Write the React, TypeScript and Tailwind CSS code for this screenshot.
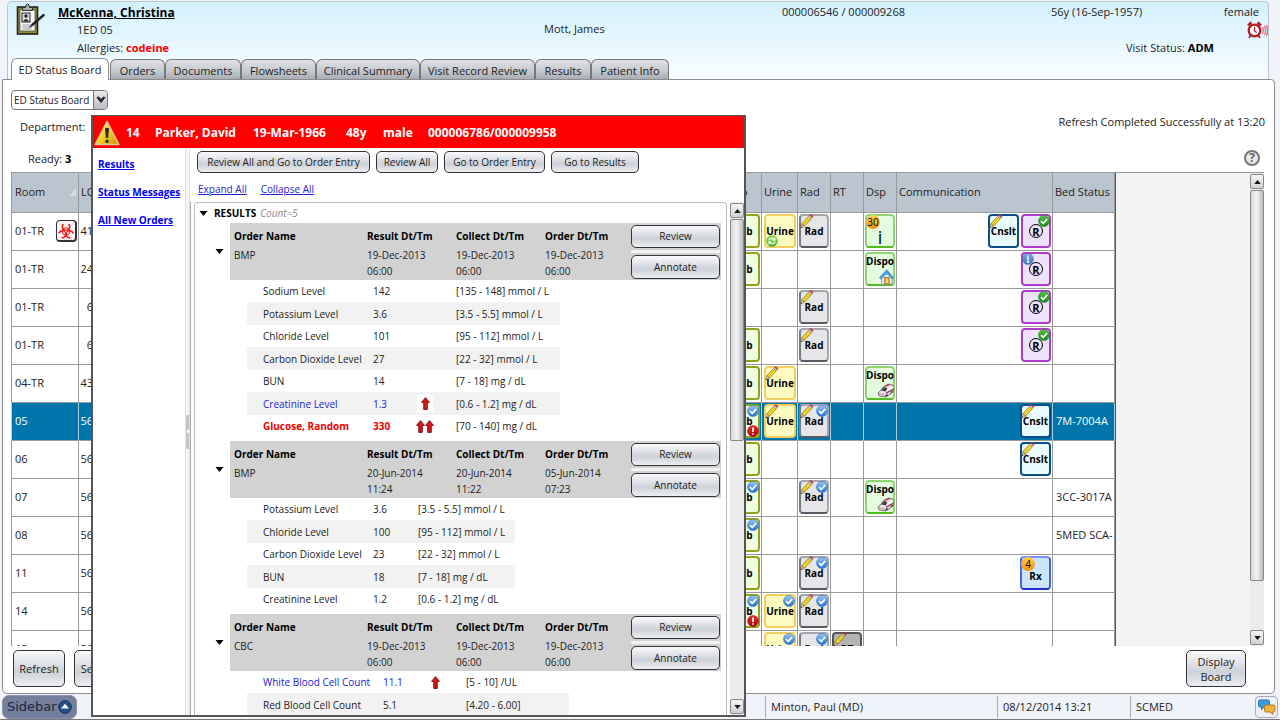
import type { ReactNode } from "react";
import clsx from "clsx";

type TileKind = "lab" | "urine" | "rad" | "rt" | "dispo" | "cnslt" | "reg" | "rx";

type TileProps = {
  kind: TileKind;
  label?: string;
  pencil?: boolean;
  check?: boolean;
  alert?: boolean;
  ok?: boolean;
  info?: boolean;
  cycle?: boolean;
  count?: number;
  pic?: "house" | "ambulance";
};

const TABS = [
  "Orders",
  "Documents",
  "Flowsheets",
  "Clinical Summary",
  "Visit Record Review",
  "Results",
  "Patient Info",
];

const TAB_WIDTHS = [
  "w-[55px]",
  "w-[76px]",
  "w-[75px]",
  "w-[104px]",
  "w-[115px]",
  "w-[56px]",
  "w-[78px]",
];

type BoardRow = {
  room: string;
  los: string;
  bio?: boolean;
  selected?: boolean;
  lab?: TileProps;
  urine?: TileProps;
  rad?: TileProps;
  rt?: TileProps;
  dsp?: TileProps;
  comm?: TileProps[];
  bed?: string;
};

const lab: TileProps = { kind: "lab" };
const rad: TileProps = { kind: "rad", pencil: true };
const radChecked: TileProps = { kind: "rad", pencil: true, check: true };
const cnslt: TileProps = { kind: "cnslt", pencil: true };
const regOk: TileProps = { kind: "reg", ok: true };
const dispoAmb: TileProps = { kind: "dispo", pic: "ambulance" };

const ROWS: BoardRow[] = [
  {
    room: "01-TR",
    los: "41",
    bio: true,
    lab,
    urine: { kind: "urine", cycle: true },
    rad,
    dsp: { kind: "dispo", label: "i", count: 30 },
    comm: [cnslt, regOk],
  },
  {
    room: "01-TR",
    los: "24",
    lab,
    dsp: { kind: "dispo", pic: "house" },
    comm: [{ kind: "reg", info: true }],
  },
  { room: "01-TR", los: "6", rad, comm: [regOk] },
  { room: "01-TR", los: "6", lab, rad, comm: [regOk] },
  { room: "04-TR", los: "43", lab, urine: { kind: "urine", pencil: true }, dsp: dispoAmb },
  {
    room: "05",
    los: "56",
    selected: true,
    lab: { kind: "lab", check: true, alert: true },
    urine: { kind: "urine", pencil: true },
    rad: radChecked,
    comm: [cnslt],
    bed: "7M-7004A",
  },
  { room: "06", los: "56", lab, comm: [cnslt] },
  {
    room: "07",
    los: "56",
    lab: { kind: "lab", check: true },
    rad: radChecked,
    dsp: dispoAmb,
    bed: "3CC-3017A",
  },
  { room: "08", los: "56", lab: { kind: "lab", check: true }, bed: "5MED SCA-" },
  { room: "11", los: "56", lab, rad: radChecked, comm: [{ kind: "rx", count: 4 }] },
  {
    room: "14",
    los: "56",
    lab: { kind: "lab", check: true, alert: true },
    urine: { kind: "urine", check: true },
    rad: radChecked,
  },
  {
    room: "15",
    los: "56",
    urine: { kind: "urine", check: true },
    rad: { kind: "rad", check: true },
    rt: { kind: "rt", pencil: true },
  },
];

type Result = {
  name: string;
  value: string;
  range: string;
  level?: "high" | "critical";
};

type OrderGroup = {
  order: string;
  result: [string, string];
  collect: [string, string];
  ordered: [string, string];
  cols: string[];
  rows: Result[];
};

const GROUPS: OrderGroup[] = [
  {
    order: "BMP",
    result: ["19-Dec-2013", "06:00"],
    collect: ["19-Dec-2013", "06:00"],
    ordered: ["19-Dec-2013", "06:00"],
    cols: ["w-[126px]", "w-[44px]", "w-[39px]", "w-[104px]"],
    rows: [
      { name: "Sodium Level", value: "142", range: "[135 - 148] mmol / L" },
      { name: "Potassium Level", value: "3.6", range: "[3.5 - 5.5] mmol / L" },
      { name: "Chloride Level", value: "101", range: "[95 - 112] mmol / L" },
      { name: "Carbon Dioxide Level", value: "27", range: "[22 - 32] mmol / L" },
      { name: "BUN", value: "14", range: "[7 - 18] mg / dL" },
      { name: "Creatinine Level", value: "1.3", range: "[0.6 - 1.2] mg / dL", level: "high" },
      { name: "Glucose, Random", value: "330", range: "[70 - 140] mg / dL", level: "critical" },
    ],
  },
  {
    order: "BMP",
    result: ["20-Jun-2014", "11:24"],
    collect: ["20-Jun-2014", "11:22"],
    ordered: ["05-Jun-2014", "07:23"],
    cols: ["w-[126px]", "w-[45px]", "w-0", "w-[97px]"],
    rows: [
      { name: "Potassium Level", value: "3.6", range: "[3.5 - 5.5] mmol / L" },
      { name: "Chloride Level", value: "100", range: "[95 - 112] mmol / L" },
      { name: "Carbon Dioxide Level", value: "23", range: "[22 - 32] mmol / L" },
      { name: "BUN", value: "18", range: "[7 - 18] mg / dL" },
      { name: "Creatinine Level", value: "1.2", range: "[0.6 - 1.2] mg / dL" },
    ],
  },
  {
    order: "CBC",
    result: ["19-Dec-2013", "06:00"],
    collect: ["19-Dec-2013", "06:00"],
    ordered: ["19-Dec-2013", "06:00"],
    cols: ["w-[136px]", "w-[44px]", "w-[39px]", "w-[103px]"],
    rows: [
      { name: "White Blood Cell Count", value: "11.1", range: "[5 - 10] /UL", level: "high" },
      { name: "Red Blood Cell Count", value: "5.1", range: "[4.20 - 6.00]" },
    ],
  },
];

export default function App() {
  return (
    <div className="relative flex h-screen w-full flex-col overflow-hidden bg-[#f1f3fa] font-['Open_Sans','Noto_Sans',sans-serif] text-[11px] leading-4 text-[#222]">
      <PatientHeader />

      <main className="mr-[5px] ml-[2px] flex min-h-0 flex-1 flex-col rounded-tr-[4px] rounded-b-[5px] border border-[#8c8c8c] bg-white">
        <Toolbar />
        <Board />
        <div className="flex h-[47px] shrink-0 justify-between pt-[4px] pr-[28px] pl-[10px]">
          <div className="flex gap-[9px]">
            <GlossButton className="h-[37px] w-[52px]">Refresh</GlossButton>
            <GlossButton className="h-[37px] w-[44px]">Select</GlossButton>
          </div>
          <GlossButton className="h-[37px] w-[60px]">
            Display
            <br />
            Board
          </GlossButton>
        </div>
      </main>

      <StatusBar />
      <AlertWindow />
    </div>
  );
}

function PatientHeader() {
  return (
    <header className="mt-px mr-[11px] ml-[7px] flex h-[78px] shrink-0 flex-col rounded-t-[5px] border border-b-0 border-[#b9c6cb] bg-linear-to-b from-[#d3f1fd] to-[#f8fdff]">
      <div className="grid h-[56px] grid-cols-[42px_486px_238px_1fr_217px] pl-[8px]">
        <ChartIcon />
        <div>
          <h1 className="h-[20px] text-[12px] leading-[22px] font-bold text-black underline">
            McKenna, Christina
          </h1>
          <p className="h-4 pl-[19px]">1ED 05</p>
          <p className="h-[18px] pl-[19px] leading-[19px]">
            Allergies: <b className="text-[#f00]">codeine</b>
          </p>
        </div>
        <p className="pt-[19px]">Mott, James</p>
        <p className="pt-[2px]">000006546 / 000009268</p>
        <div>
          <p className="flex h-[19px] justify-between pt-[2px] pr-[9px]">
            <span>56y (16-Sep-1957)</span>
            <span>female</span>
          </p>
          <div className="flex h-[17px] justify-end">
            <AlarmIcon />
          </div>
          <p className="h-[18px] pl-[75px] leading-[19px]">
            Visit Status: <b className="text-black">ADM</b>
          </p>
        </div>
      </div>

      <nav className="mt-auto flex items-end gap-px pl-[3px]">
        <a
          href="#board"
          className="z-10 -mb-px h-[22px] w-[98px] rounded-t-[6px] border border-b-0 border-[#8c8c8c] bg-white text-center leading-[22px]"
        >
          ED Status Board
        </a>
        {TABS.map((tab, i) => (
          <a
            key={tab}
            href="#tab"
            className={clsx(
              "-mr-px h-[20px] rounded-t-[6px] border border-b-0 border-[#777] bg-linear-to-b from-[#dfe2e6] via-[#c9cdd2] to-[#a9aeb6] text-center leading-[22px] whitespace-nowrap",
              TAB_WIDTHS[i],
            )}
          >
            {tab}
          </a>
        ))}
      </nav>
    </header>
  );
}

function Toolbar() {
  return (
    <div className="flex h-[92px] shrink-0 justify-between pr-[9px] pl-[8px]">
      <div className="pt-[10px]">
        <label className="relative flex h-[20px] w-[97px]">
          <select
            aria-label="Board"
            className="w-full appearance-none rounded-[4px] border border-[#777] bg-white pl-[2px] text-[10px]"
          >
            <option>ED Status Board</option>
          </select>
          <span className="pointer-events-none absolute inset-y-px right-px flex w-[14px] items-center justify-center rounded-r-[3px] border-l border-[#777] bg-linear-to-b from-[#e8eaec] to-[#b8bdc4]">
            <svg viewBox="0 0 10 8" className="h-[8px] w-[10px]">
              <path d="M1 1.5 5 6.5 9 1.5 7.4 1 5 3.4 2.6 1Z" fill="#222" stroke="#222" />
            </svg>
          </span>
        </label>
        <p className="mt-[9px] pl-[9px]">Department:</p>
        <p className="mt-4 pl-[17px]">
          Ready: <b className="text-black">3</b>
        </p>
      </div>
      <div className="flex flex-col items-end pt-[34px]">
        <p>Refresh Completed Successfully at 13:20</p>
        <button
          type="button"
          aria-label="Help"
          className="mt-[20px] mr-[5px] flex h-[16px] w-[16px] items-center justify-center rounded-full border-2 border-[#777] bg-[#e8e8e8] text-[12px] leading-none font-bold text-[#666]"
        >
          ?
        </button>
      </div>
    </div>
  );
}

/* Tracking board. The middle columns sit behind the alert window. */
function Board() {
  return (
    <section
      id="board"
      className="mr-[10px] ml-[8px] flex min-h-0 flex-1 overflow-hidden border-t border-[#999]"
    >
      <div className="min-w-0 flex-1 border-r border-[#555]">
        <table className="w-full table-fixed border-collapse">
          <thead>
            <tr className="h-[39px] bg-[#bac5d0] text-left [&>th]:border-r [&>th]:border-[#999] [&>th]:pl-[2px] [&>th]:font-normal">
              <th className="w-[67px] border-l">
                <span className="flex items-center justify-between pr-[2px] pl-px">
                  Room
                  <svg viewBox="0 0 6 7" className="h-[7px] w-[6px]">
                    <path d="M.5 6.5 5.5.5v6Z" fill="#cfd6dd" stroke="#eee" strokeWidth=".7" />
                  </svg>
                </span>
              </th>
              <th className="w-[40px]">LOS</th>
              <th />
              <th className="w-[35px]">Lab</th>
              <th className="w-[36px]">Urine</th>
              <th className="w-[33px]">Rad</th>
              <th className="w-[33px]">RT</th>
              <th className="w-[33px]">Dsp</th>
              <th className="w-[156px]">Communication</th>
              <th className="w-[62px] whitespace-nowrap">Bed Status</th>
            </tr>
          </thead>
          <tbody>
            {ROWS.map((row, i) => (
              <tr
                key={i}
                className={clsx(
                  "h-[38px] border-y border-[#999] [&>td]:border-r [&>td]:p-0",
                  row.selected
                    ? "bg-[#0075ab] text-white [&>td]:border-[#a8cfe2]"
                    : "[&>td]:border-[#999]",
                )}
              >
                <td className="border-l">
                  <span className="flex h-[37px] items-center justify-between pr-px pl-[3px]">
                    {row.room}
                    {row.bio && <Biohazard />}
                  </span>
                </td>
                <td>
                  <span className="block w-[14px] text-right">{row.los}</span>
                </td>
                <td />
                <TileCell tiles={[row.lab]} />
                <TileCell tiles={[row.urine]} />
                <TileCell tiles={[row.rad]} />
                <TileCell tiles={[row.rt]} />
                <TileCell tiles={[row.dsp]} />
                <TileCell tiles={row.comm ?? []} />
                <td>
                  <span className="block overflow-hidden pl-[3px] whitespace-nowrap">{row.bed}</span>
                </td>
              </tr>
            ))}
          </tbody>
        </table>
      </div>
      <div className="w-[134px] bg-[#f3f3f3]" />
      <ScrollBar thumb="h-[391px]" />
    </section>
  );
}

function TileCell({ tiles }: { tiles: (TileProps | undefined)[] }) {
  return (
    <td>
      <div className="flex h-[37px] items-center justify-end gap-[2px] pr-px">
        {tiles.map((t, i) => t && <Tile key={i} {...t} />)}
      </div>
    </td>
  );
}

const TILE_STYLE: Record<TileKind, string> = {
  lab: "w-[34px] border-[#8fa41c] bg-[#f0fde0]",
  urine: "w-[32px] border-[#f3cf62] bg-[#fdfbc0]",
  rad: "w-[30px] border-[#a3a6ab] border-b-[#555c64] border-l-[#777c84] bg-[#e6e6e9]",
  rt: "w-[30px] border-[#555] bg-[#b4b4b4]",
  dispo: "w-[30px] border-[#8fd672] border-b-[#52bd1e] bg-[#e4fce0]",
  cnslt: "w-[31px] border-[#0b4f8a] bg-[#e9fbfd]",
  reg: "w-[30px] border-[#ad3cc8] bg-[#ece3fa]",
  rx: "w-[31px] border-[#7f8ff0] border-x-[#4b61e0] border-b-[#1f2fd0] bg-[#cbe6fc]",
};

const TILE_LABEL: Record<TileKind, string> = {
  lab: "Lab",
  urine: "Urine",
  rad: "Rad",
  rt: "RT",
  dispo: "Dispo",
  cnslt: "Cnslt",
  reg: "®",
  rx: "Rx",
};

function Tile(p: TileProps) {
  return (
    <span
      className={clsx(
        "relative flex h-[34px] items-center justify-center rounded-[4px] border-2 text-[10px] leading-3 font-bold whitespace-nowrap text-black",
        TILE_STYLE[p.kind],
      )}
    >
      {p.kind === "reg" ? (
        <span className="flex h-[14px] w-[14px] items-center justify-center rounded-full border border-black text-[11px] leading-none">
          R
        </span>
      ) : (
        <span
          className={clsx(
            p.pic && "-mt-4",
            p.label && "pt-3 text-[18px] font-normal",
            p.kind === "rx" && "pt-[6px]",
          )}
        >
          {p.label ?? TILE_LABEL[p.kind]}
        </span>
      )}
      {p.pencil && <Pencil />}
      {p.check && <RoundBadge at="-top-px -right-px" from="#9cc8f5" to="#1f6fd0" mark="check" />}
      {p.ok && <RoundBadge at="-top-px -right-px" from="#5cc24a" to="#0f8a14" mark="check" />}
      {p.alert && <RoundBadge at="-right-px -bottom-px" from="#e03030" to="#b00010" mark="bang" />}
      {p.cycle && <RoundBadge at="-bottom-px left-0" from="#8fdc60" to="#4bb52a" mark="cycle" />}
      {p.info && <RoundBadge at="-top-px -left-px" from="#84aee4" to="#3b70bd" mark="info" />}
      {p.count && (
        <span className="absolute -top-px -left-px flex h-[14px] w-[14px] items-center justify-center rounded-full bg-linear-to-b from-[#ffd24a] to-[#f09000] text-[10px] leading-none font-normal">
          {p.count}
        </span>
      )}
      {p.pic === "house" && <House />}
      {p.pic === "ambulance" && <Ambulance />}
    </span>
  );
}

function RoundBadge({
  at,
  from,
  to,
  mark,
}: {
  at: string;
  from: string;
  to: string;
  mark: "check" | "bang" | "cycle" | "info";
}) {
  const id = `badge-${mark}-${to.slice(1)}`;
  return (
    <svg viewBox="0 0 12 12" className={clsx("absolute h-[12px] w-[12px]", at)}>
      <defs>
        <linearGradient id={id} x1="0" y1="0" x2="0" y2="1">
          <stop offset="0" stopColor={from} />
          <stop offset="1" stopColor={to} />
        </linearGradient>
      </defs>
      <circle cx="6" cy="6" r="5.5" fill={`url(#${id})`} stroke={to} strokeWidth=".5" />
      {mark === "check" && (
        <path d="M3 6.2 5.2 8.4 9.2 4" fill="none" stroke="#fff" strokeWidth="1.7" />
      )}
      {mark === "bang" && (
        <path d="M6 2.5v4.4M6 8.2v1.5" fill="none" stroke="#fff" strokeWidth="1.7" />
      )}
      {mark === "info" && (
        <path d="M6 2.4v1.5M4.8 5H6v4M4.6 9.2h2.9" fill="none" stroke="#fff" strokeWidth="1.3" />
      )}
      {mark === "cycle" && (
        <path
          d="M2.8 5.2C4 3 7 3 8.6 4.6M9 2.8v2.4H6.7M9.2 6.8C8 9 5 9 3.4 7.4M3 9.2V6.8h2.3"
          fill="none"
          stroke="#fff"
          strokeWidth="1.2"
        />
      )}
    </svg>
  );
}

function Pencil() {
  return (
    <svg viewBox="0 0 14 15" className="absolute -top-[2px] -left-px h-[15px] w-[14px]">
      <path d="M.8 14 2 9.6 4.6 12Z" fill="#e9c99a" stroke="#6b5220" strokeWidth=".5" />
      <path d="M2 9.6 8.6 2.4 11.3 4.8 4.6 12Z" fill="#fbe32d" stroke="#7a5a10" strokeWidth=".7" />
      <path d="M3.2 10.8 9.9 3.6" stroke="#c99a10" strokeWidth=".6" />
      <path d="M8.6 2.4 9.7 1.2 12.4 3.6 11.3 4.8Z" fill="#cfd2d6" stroke="#777" strokeWidth=".4" />
      <path d="M9.7 1.2C10.9-.2 14 2 12.4 3.6Z" fill="#e2434a" stroke="#992026" strokeWidth=".5" />
      <path d="M.8 14 1.2 12.6 2 13.4Z" fill="#222" />
    </svg>
  );
}

function House() {
  return (
    <svg viewBox="0 0 15 16" className="absolute -right-px -bottom-px h-[16px] w-[15px]">
      <path d="M2.600 8v7.400h10.400V8L7.800 2.800Z" fill="#e3eef8" stroke="#6f93b3" strokeWidth=".8" />
      <path d="M.4 8.600 7.800.8l6.800 7.800-1.600 1.400L7.800 4.400 2 10.200Z" fill="#4ca3dd" stroke="#1f6fae" strokeWidth=".5" />
      <rect x="5.700" y="8.400" width="4.400" height="6.600" fill="#f5b330" stroke="#a06410" strokeWidth=".8" />
      <rect x="7" y="9.600" width="1.800" height="4.200" fill="#fbe08a" />
    </svg>
  );
}

function Ambulance() {
  return (
    <svg viewBox="0 0 17 15" className="absolute -right-px bottom-0 h-[15px] w-[17px]">
      <path d="M1 10 4 7.200 6.600 3.400 12 1l4.600 1.600v6L9 14 2.400 13Z" fill="#e6e1e6" stroke="#6d6066" strokeWidth=".9" />
      <path d="M4.200 7.400 6.900 3.900 10.400 5 8.800 8.600Z" fill="#4a3d45" />
      <path d="M10.600 5 16.200 2.900v2.300L9.800 8.200Z" fill="#f7f4f6" />
      <path d="M9.200 9.400 16.400 5.600v1.500L9 11Z" fill="#8c3540" />
      <path d="M7.600 3 12 1.100l1 .9L8.600 3.800Z" fill="#c22834" />
      <path d="M8.200 13.800c0-2.600 2.600-3.600 2.800-1.200ZM13.600 10.400c0-2.400 2.200-3.400 2.400-1.600Z" fill="#3a3438" />
      <path d="M1.400 10.600 4 11.200M5 11.600 7.600 12" stroke="#a08088" strokeWidth="1" />
    </svg>
  );
}

function Biohazard() {
  return (
    <span className="flex h-[22px] w-[21px] items-center justify-center rounded-[4px] border border-r-2 border-b-2 border-[#333] bg-[#fff5f5]">
      <svg viewBox="0 0 24 24" className="h-[16px] w-[16px]">
        <g fill="none" stroke="#f01818" strokeWidth="2.4">
          <path d="M8 1.600C4.600 5.600 7 11 12 11s7.400-5.400 4-9.400" />
          <path d="M.8 15.600C3.600 10.600 9.400 10.400 11.400 14s-.8 8-6 8.400" />
          <path d="M23.200 15.600C20.400 10.600 14.600 10.400 12.600 14s.8 8 6 8.400" />
          <circle cx="12" cy="12.600" r="5.600" strokeWidth="1.500" />
        </g>
        <circle cx="12" cy="12.600" r="1.300" fill="#fff" />
      </svg>
    </span>
  );
}

/* Alert window floating over the board. */
function AlertWindow() {
  return (
    <section
      role="dialog"
      aria-label="Parker, David"
      className="absolute top-[115px] bottom-[3px] left-[91px] z-20 flex w-[655px] flex-col overflow-hidden border-2 border-t border-[#555] bg-white"
    >
      <div className="flex h-[32px] shrink-0 items-center bg-[#f00] pt-px text-[12px] font-bold text-white">
        <WarningIcon />
        <span className="ml-[6px] w-[29px]">14</span>
        <span className="w-[98px]">Parker, David</span>
        <span className="w-[93px]">19-Mar-1966</span>
        <span className="w-[37px]">48y</span>
        <span className="w-[45px]">male</span>
        <span>000006786/000009958</span>
      </div>

      <div className="flex min-h-0 flex-1 text-[10px]">
        <nav className="flex w-[92px] shrink-0 flex-col gap-3 pt-2 pl-[5px] font-bold whitespace-nowrap text-[#00f] underline">
          <a href="#results">Results</a>
          <a href="#messages">Status Messages</a>
          <a href="#orders">All New Orders</a>
        </nav>
        <div className="flex w-[5px] shrink-0 flex-col justify-center border-x border-[#e2e2e2] bg-[#f5f5f5]">
          <div className="flex h-[34px] items-center bg-[#c4c4c4]">
            <svg viewBox="0 0 3 6" className="h-[5px] w-[3px]">
              <path d="M3 0v6L0 3Z" fill="#fff" />
            </svg>
          </div>
        </div>

        <div className="flex min-w-0 flex-1 flex-col pt-[3px]">
          <div className="flex gap-[6px] pl-[7px]">
            <GlossButton className="h-[22px] w-[173px]">Review All and Go to Order Entry</GlossButton>
            <GlossButton className="h-[22px] w-[62px]">Review All</GlossButton>
            <GlossButton className="h-[22px] w-[101px]">Go to Order Entry</GlossButton>
            <GlossButton className="h-[22px] w-[88px]">Go to Results</GlossButton>
          </div>
          <div className="mt-[8px] mb-[5px] flex gap-[14px] pl-[8px] text-[#22c] underline">
            <a href="#expand">Expand All</a>
            <a href="#collapse">Collapse All</a>
          </div>

          <div className="flex min-h-0 flex-1 border-l border-[#aaa]">
            <div
              id="results"
              className="mr-[3px] ml-[3px] min-w-0 flex-1 overflow-hidden rounded-t-[4px] border border-b-0 border-[#bbb]"
            >
              <h2 className="flex h-[20px] items-center">
                <Caret className="ml-[4px]" />
                <b className="ml-[6px] text-black">RESULTS</b>
                <i className="ml-1 text-[#888]">Count=5</i>
              </h2>
              {GROUPS.map((g, i) => (
                <ResultGroup key={i} group={g} />
              ))}
            </div>
            <ScrollBar thumb="h-[222px]" />
          </div>
        </div>
      </div>
    </section>
  );
}

function ResultGroup({ group }: { group: OrderGroup }) {
  const columns: [string, [string, string]][] = [
    ["Result Dt/Tm", group.result],
    ["Collect Dt/Tm", group.collect],
    ["Order Dt/Tm", group.ordered],
  ];
  return (
    <div className="mb-1 pr-[5px] pl-[20px]">
      <div className="flex h-[57px] items-center">
        <Caret className="mr-[6px]" />
        <div className="flex h-full min-w-0 flex-1 bg-[#d2d2d2] pt-[5px] pl-1">
          <div className="w-[133px] shrink-0">
            <b className="block h-[19px] text-black">Order Name</b>
            {group.order}
          </div>
          {columns.map(([title, [date, time]]) => (
            <div key={title} className="w-[89px] shrink-0 whitespace-nowrap">
              <b className="block h-[19px] text-black">{title}</b>
              {date}
              <br />
              {time}
            </div>
          ))}
        </div>
        <div className="flex h-full w-[90px] shrink-0 flex-col justify-between bg-[#d2d2d2] pt-[2px] pr-px pb-px">
          <GlossButton className="h-[23px] w-[89px]">Review</GlossButton>
          <div className="h-[3px] bg-[#f3f3f3]" />
          <GlossButton className="h-[24px] w-[89px]">Annotate</GlossButton>
        </div>
      </div>
      <table className="ml-[32px] table-fixed">
        <tbody>
          {group.rows.map((r) => (
            <tr
              key={r.name}
              className={clsx(
                "h-[22px] even:h-[23px] even:bg-[#f2f2f2] [&>td]:p-0 [&>td]:whitespace-nowrap",
                r.level === "high" && "[&>td:nth-child(-n+2)]:text-[#22d]",
                r.level === "critical" &&
                  "[&>td:nth-child(-n+2)]:font-bold [&>td:nth-child(-n+2)]:text-[#e00]",
              )}
            >
              <td className={group.cols[0]}>
                <span className="pl-4">{r.name}</span>
              </td>
              <td className={group.cols[1]}>{r.value}</td>
              <td className={group.cols[2]}>
                {r.level && (
                  <span className="flex h-[18px] w-[16px] items-center justify-center bg-white">
                    <UpArrow />
                    {r.level === "critical" && <UpArrow />}
                  </span>
                )}
              </td>
              <td className={group.cols[3]}>{r.range}</td>
            </tr>
          ))}
        </tbody>
      </table>
    </div>
  );
}

function GlossButton({ className, children }: { className?: string; children: ReactNode }) {
  return (
    <button
      type="button"
      className={clsx(
        "shrink-0 rounded-[5px] border border-[#333] bg-linear-to-b from-[#fafafc] via-[#cdd2d9] via-60% to-[#eceef1] leading-[15px] whitespace-nowrap",
        className,
      )}
    >
      {children}
    </button>
  );
}

function ScrollBar({ thumb }: { thumb: string }) {
  const arrow =
    "flex h-[15px] w-full shrink-0 items-center justify-center rounded-[2px] border border-[#888] bg-linear-to-b from-[#f4f4f4] to-[#cfd2d6]";
  return (
    <div className="flex w-[14px] shrink-0 flex-col justify-between bg-[#ececec] py-px">
      <div>
        <button type="button" aria-label="Scroll up" className={arrow}>
          <svg viewBox="0 0 8 5" className="h-[4px] w-[7px]">
            <path d="M0 5 4 0l4 5Z" fill="#111" />
          </svg>
        </button>
        <div
          className={clsx(
            "mt-px w-full rounded-[2px] border border-[#888] bg-linear-to-r from-[#d8d8da] via-[#f4f4f5] to-[#b9bcc2]",
            thumb,
          )}
        />
      </div>
      <button type="button" aria-label="Scroll down" className={arrow}>
        <svg viewBox="0 0 8 5" className="h-[4px] w-[7px]">
          <path d="M0 0h8L4 5Z" fill="#111" />
        </svg>
      </button>
    </div>
  );
}

function StatusBar() {
  return (
    <footer className="flex h-[26px] shrink-0 items-center border-b border-[#777] pl-[2px]">
      <button
        type="button"
        className="flex h-[24px] w-[75px] items-center justify-between rounded-[7px] border border-[#8790ac] bg-[#747f9d] px-[4px] font-['DejaVu_Sans',sans-serif] text-[13px] text-[#22263a]"
      >
        Sidebar
        <svg viewBox="0 0 14 14" className="h-[14px] w-[14px]">
          <circle cx="7" cy="7" r="6.300" fill="#234f86" stroke="#16305a" />
          <path d="M3 8.600h8L7 3.800Z" fill="#fff" />
        </svg>
      </button>
      <div className="ml-auto flex h-[22px] items-center [&>p]:h-full [&>p]:border-l [&>p]:border-[#aaa] [&>p]:pl-[5px] [&>p]:leading-[22px]">
        <p className="w-[232px]">Minton, Paul (MD)</p>
        <p className="w-[133px]">08/12/2014 13:21</p>
        <p className="w-[125px]">SCMED</p>
      </div>
      <button
        type="button"
        aria-label="Messages"
        className="mr-[2px] flex h-[22px] w-[23px] items-center justify-center rounded-[4px] border border-[#aab] bg-[#eef0f8]"
      >
        <svg viewBox="0 0 18 16" className="h-[16px] w-[18px]">
          <path d="M2 1h8q1.500 0 1.500 1.500v4Q11.500 8 10 8H6L3.500 10.500V8H2Q.5 8 .5 6.500v-4Q.5 1 2 1Z" fill="#3c9be0" stroke="#2472b4" />
          <path d="M8 6h7q2 0 2 1.500v4q0 1.500-2 1.500v2.400L12 13H8q-1.500 0-1.500-1.500v-4Q6.500 6 8 6Z" fill="#f3b13c" stroke="#b87a1c" />
        </svg>
      </button>
    </footer>
  );
}

function Caret({ className }: { className?: string }) {
  return (
    <svg viewBox="0 0 8 5" className={clsx("h-[5px] w-[9px] shrink-0", className)}>
      <path d="M0 0h8L4 5Z" fill="#000" />
    </svg>
  );
}

function UpArrow() {
  return (
    <svg viewBox="0 0 9 13" className="h-[13px] w-[9px] shrink-0">
      <path d="M4.500.6 8.500 5.400H6.300v7H2.700v-7H.5Z" fill="#dc1414" stroke="#5c0a0a" strokeWidth=".8" />
    </svg>
  );
}

function WarningIcon() {
  return (
    <svg viewBox="0 0 26 26" className="ml-px h-[26px] w-[26px]">
      <defs>
        <linearGradient id="warn" x1="0" y1="0" x2="1" y2="1">
          <stop offset="0" stopColor="#fff27a" />
          <stop offset=".5" stopColor="#f8d21c" />
          <stop offset="1" stopColor="#c98d08" />
        </linearGradient>
      </defs>
      <path d="M13 1.500 24.800 24.500H1.200Z" fill="url(#warn)" stroke="#d8c99a" strokeWidth="1.600" strokeLinejoin="round" />
      <path d="M11 8.600q2-1.600 4 0L14.200 18h-2.400Z" fill="#2c2c14" />
      <circle cx="13" cy="21.200" r="1.700" fill="#2c2c14" />
    </svg>
  );
}

function ChartIcon() {
  return (
    <svg viewBox="0 0 30 32" className="mt-px h-[32px] w-[30px]">
      <rect x="1.500" y="4" width="20" height="27" fill="#8a9130" stroke="#222" strokeWidth="1.600" />
      <rect x="4" y="7" width="15" height="21" fill="#f6f6f6" stroke="#333" strokeWidth=".6" />
      <path d="M6.500 7.500V4.500H9.500Q9.500 1 11.500 1T13.500 4.500H16.500V7.500Z" fill="#aaa" stroke="#333" />
      <rect x="6" y="10" width="8" height="9" fill="#ddd" stroke="#222" />
      <circle cx="10" cy="13" r="1.700" fill="#222" />
      <path d="M7 18.500q3-5 6 0Z" fill="#222" />
      <path d="M6.500 22h8M6.500 24h10M6.500 26h9" stroke="#888" strokeWidth=".8" />
      <path d="M12.500 25 16 20.500 27 11q2.500-.5 1.500 2L17.500 22.500Z" fill="#222" />
    </svg>
  );
}

function AlarmIcon() {
  return (
    <svg viewBox="0 0 21 18" className="h-[18px] w-[21px]">
      <g fill="none" stroke="#b01a22">
        <circle cx="7.500" cy="9.500" r="5.800" strokeWidth="2.200" fill="#fff" />
        <path d="M1 4.400 4.400 1.400M10.600 1.400 14 4.400" strokeWidth="2.600" />
        <path d="M7.500 6v4l2.200 1.600" strokeWidth="1.200" />
        <path d="M3.400 14.600 2 17M11.600 14.600 13 17" strokeWidth="1.600" />
        <path d="M15.500 6q1.500 3.500 0 7M17.500 5q2 4.500 0 9M19.400 4q2.400 5.500 0 11" stroke="#e8606a" strokeWidth="1.200" />
      </g>
    </svg>
  );
}
